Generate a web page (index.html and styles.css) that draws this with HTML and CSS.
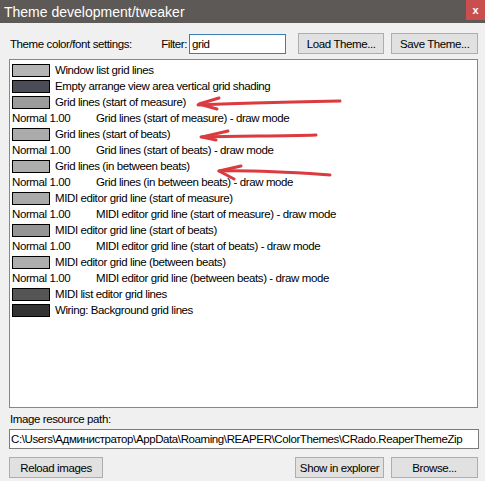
FILE: index.html
```html
<!DOCTYPE html>
<html lang="en">
  <head>
    <meta charset="UTF-8" />
    <title>Theme development/tweaker</title>
    <link rel="stylesheet" href="styles.css">
  </head>

  <body>
    <div class="window">
      <div class="titlebar">
        <span class="title">Theme development/tweaker</span>
        <span class="close">x</span>
      </div>

      <div class="content">
        <div class="toolbar">
          <span class="settings-label">Theme color/font settings:</span>
          <label class="filter-label" for="filter">Filter:</label>
          <input type="text" id="filter" class="filter" value="grid" />
          <button class="btn btn-load">Load Theme...</button>
          <button class="btn btn-save">Save Theme...</button>
        </div>

        <div class="list">
          <div class="row"><span class="swatch" style="background: #b4b4b4"></span>Window list grid lines</div>
          <div class="row"><span class="swatch" style="background: #4b4d56"></span>Empty arrange view area vertical grid shading</div>
          <div class="row"><span class="swatch" style="background: #9c9c9c"></span>Grid lines (start of measure)</div>
          <div class="row mode"><span class="mode-val">Normal 1.00</span>Grid lines (start of measure) - draw mode</div>
          <div class="row"><span class="swatch" style="background: #ababab"></span>Grid lines (start of beats)</div>
          <div class="row mode"><span class="mode-val">Normal 1.00</span>Grid lines (start of beats) - draw mode</div>
          <div class="row"><span class="swatch" style="background: #adadad"></span>Grid lines (in between beats)</div>
          <div class="row mode"><span class="mode-val">Normal 1.00</span>Grid lines (in between beats) - draw mode</div>
          <div class="row"><span class="swatch" style="background: #a9a9a9"></span>MIDI editor grid line (start of measure)</div>
          <div class="row mode"><span class="mode-val">Normal 1.00</span>MIDI editor grid line (start of measure) - draw mode</div>
          <div class="row"><span class="swatch" style="background: #959595"></span>MIDI editor grid line (start of beats)</div>
          <div class="row mode"><span class="mode-val">Normal 1.00</span>MIDI editor grid line (start of beats) - draw mode</div>
          <div class="row"><span class="swatch" style="background: #aeaeae"></span>MIDI editor grid line (between beats)</div>
          <div class="row mode"><span class="mode-val">Normal 1.00</span>MIDI editor grid line (between beats) - draw mode</div>
          <div class="row"><span class="swatch" style="background: #555555"></span>MIDI list editor grid lines</div>
          <div class="row"><span class="swatch" style="background: #333333"></span>Wiring: Background grid lines</div>
        </div>

        <div class="path-label">Image resource path:</div>
        <input type="text" class="path" value="C:\Users\Администратор\AppData\Roaming\REAPER\ColorThemes\CRado.ReaperThemeZip" />

        <div class="footer">
          <button class="btn btn-reload">Reload images</button>
          <span class="spacer"></span>
          <button class="btn btn-show">Show in explorer</button>
          <button class="btn btn-browse">Browse...</button>
        </div>
      </div>

      <!-- hand-drawn marks over the list -->
      <svg class="marks" width="485" height="481" viewBox="0 0 485 481">
        <g fill="none" stroke="#d8252b" stroke-width="3" stroke-linecap="round" stroke-linejoin="round">
          <path d="M198 105 C 240 103, 290 102, 340 101" />
          <path d="M219 98 L 199 104 L 217 109" />
          <path d="M201 137 C 240 136, 280 136, 316 135" />
          <path d="M228 131 L 202 137 L 216 140" />
          <path d="M219 171 C 260 170, 300 173, 330 175" />
          <path d="M241 166 L 219 171 L 234 179" />
        </g>
      </svg>
    </div>
  </body>
</html>
```

FILE: styles.css
```css
body {
  margin: 0;
  font-family: "Liberation Sans", Arial, sans-serif;
  font-size: 11.5px;
  letter-spacing: -0.4px;
  color: #000;
}

.window {
  position: relative;
  width: 485px;
  height: 481px;
  background: #f0f0f0;
  overflow: hidden;
}

.titlebar {
  height: 23px;
  background: #5d5956;
  display: flex;
  align-items: center;
  justify-content: space-between;
}

.title {
  color: #fff;
  font-size: 14px;
  letter-spacing: 0;
  padding-left: 4px;
}

.close {
  align-self: flex-start;
  width: 19px;
  height: 20px;
  background: #c94f4f;
  color: #fff;
  font-size: 11px;
  font-weight: bold;
  letter-spacing: 0;
  display: flex;
  align-items: center;
  justify-content: center;
}

.content {
  padding: 10px 7px 0 9px;
  display: flex;
  flex-direction: column;
}

.toolbar {
  display: flex;
  align-items: center;
  height: 21px;
  white-space: nowrap;
}

.settings-label {
  padding-left: 1px;
  width: 152px;
}

.filter-label {
  width: 28px;
}

input[type="text"] {
  font-family: inherit;
  font-size: inherit;
  letter-spacing: inherit;
  box-sizing: border-box;
  margin: 0;
  background: #fff;
  color: #000;
  outline: none;
}

.filter {
  width: 97px;
  height: 20px;
  padding: 0 2px;
  border: 1px solid #3c7fb1;
}

.btn {
  font-family: inherit;
  font-size: inherit;
  letter-spacing: inherit;
  white-space: nowrap;
  color: #000;
  height: 21px;
  padding: 0;
  background: #e1e1e1;
  border: 1px solid #adadad;
  box-sizing: border-box;
}

.btn-load {
  width: 87px;
  margin-left: 12px;
}

.btn-save {
  width: 87px;
  margin-left: 7px;
}

.list {
  margin-top: 5px;
  height: 349px;
  box-sizing: border-box;
  border: 1px solid #828790;
  background: #fff;
  padding: 2px 0 0 2px;
}

.row {
  height: 16px;
  display: flex;
  align-items: center;
  white-space: nowrap;
}

.swatch {
  width: 36px;
  height: 11px;
  border: 1px solid #000;
  margin-right: 5px;
  flex: none;
}

.mode-val {
  width: 84px;
  flex: none;
}

.path-label {
  margin-top: 3px;
  padding-left: 1px;
  height: 16px;
  line-height: 16px;
}

.path {
  margin-top: 2px !important;
  width: 470px;
  height: 20px;
  padding: 0 1px;
  border: 1px solid #7a7a7a;
}

.footer {
  margin-top: 8px;
  display: flex;
}

.btn-reload {
  width: 94px;
}

.spacer {
  flex: 1;
}

.btn-show {
  width: 89px;
}

.btn-browse {
  width: 87px;
  margin-left: 7px;
}

.marks {
  position: absolute;
  left: 0;
  top: 0;
  pointer-events: none;
  opacity: 0.9;
}
```
